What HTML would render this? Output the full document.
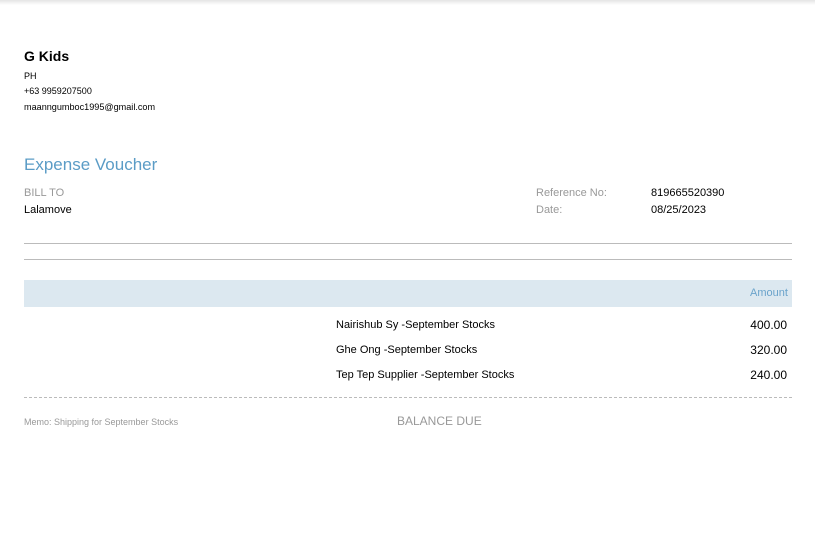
<!DOCTYPE html>
<html><head><meta charset="utf-8"><style>
body{margin:0;width:815px;height:546px;background:#fff;font-family:"Liberation Sans",Arial,sans-serif;position:relative;overflow:hidden;color:#000}
.a{position:absolute;white-space:nowrap}
.shadow{position:absolute;left:0;top:0;width:815px;height:5px;background:linear-gradient(#e4e4e4,#fff)}
</style></head><body>
<div class="shadow"></div>
<div class="a" style="left:24px;top:48px;font-size:14px;font-weight:bold">G Kids</div>
<div class="a" style="left:24px;top:71px;font-size:9px">PH</div>
<div class="a" style="left:24px;top:86px;font-size:9px">+63 9959207500</div>
<div class="a" style="left:24px;top:102px;font-size:9.1px">maanngumboc1995@gmail.com</div>
<div class="a" style="left:24px;top:155px;font-size:17px;color:#5b9cc6">Expense Voucher</div>
<div class="a" style="left:24px;top:187px;font-size:11px;color:#999">BILL TO</div>
<div class="a" style="left:24px;top:204px;font-size:11px">Lalamove</div>
<div class="a" style="left:536px;top:187px;font-size:11px;color:#999">Reference No:</div>
<div class="a" style="left:651px;top:187px;font-size:11px">819665520390</div>
<div class="a" style="left:536px;top:204px;font-size:11px;color:#999">Date:</div>
<div class="a" style="left:651px;top:204px;font-size:11px">08/25/2023</div>
<div class="a" style="left:24px;top:243px;width:768px;height:1px;background:#bbb"></div>
<div class="a" style="left:24px;top:259px;width:768px;height:1px;background:#bbb"></div>
<div class="a" style="left:24px;top:280px;width:768px;height:27px;background:#dce8f0"></div>
<div class="a" style="left:750px;top:287px;font-size:11px;color:#6aa3cb">Amount</div>
<div class="a" style="left:336px;top:319px;font-size:11px">Nairishub Sy -September Stocks</div>
<div class="a" style="right:28px;top:318px;font-size:12px">400.00</div>
<div class="a" style="left:336px;top:344px;font-size:11px">Ghe Ong -September Stocks</div>
<div class="a" style="right:28px;top:343px;font-size:12px">320.00</div>
<div class="a" style="left:336px;top:369px;font-size:11px">Tep Tep Supplier -September Stocks</div>
<div class="a" style="right:28px;top:368px;font-size:12px">240.00</div>
<div class="a" style="left:24px;top:397px;width:768px;border-top:1px dashed #bbb"></div>
<div class="a" style="left:24px;top:417px;font-size:9px;color:#999">Memo: Shipping for September Stocks</div>
<div class="a" style="left:397px;top:414px;font-size:12px;color:#999">BALANCE DUE</div>
</body></html>
